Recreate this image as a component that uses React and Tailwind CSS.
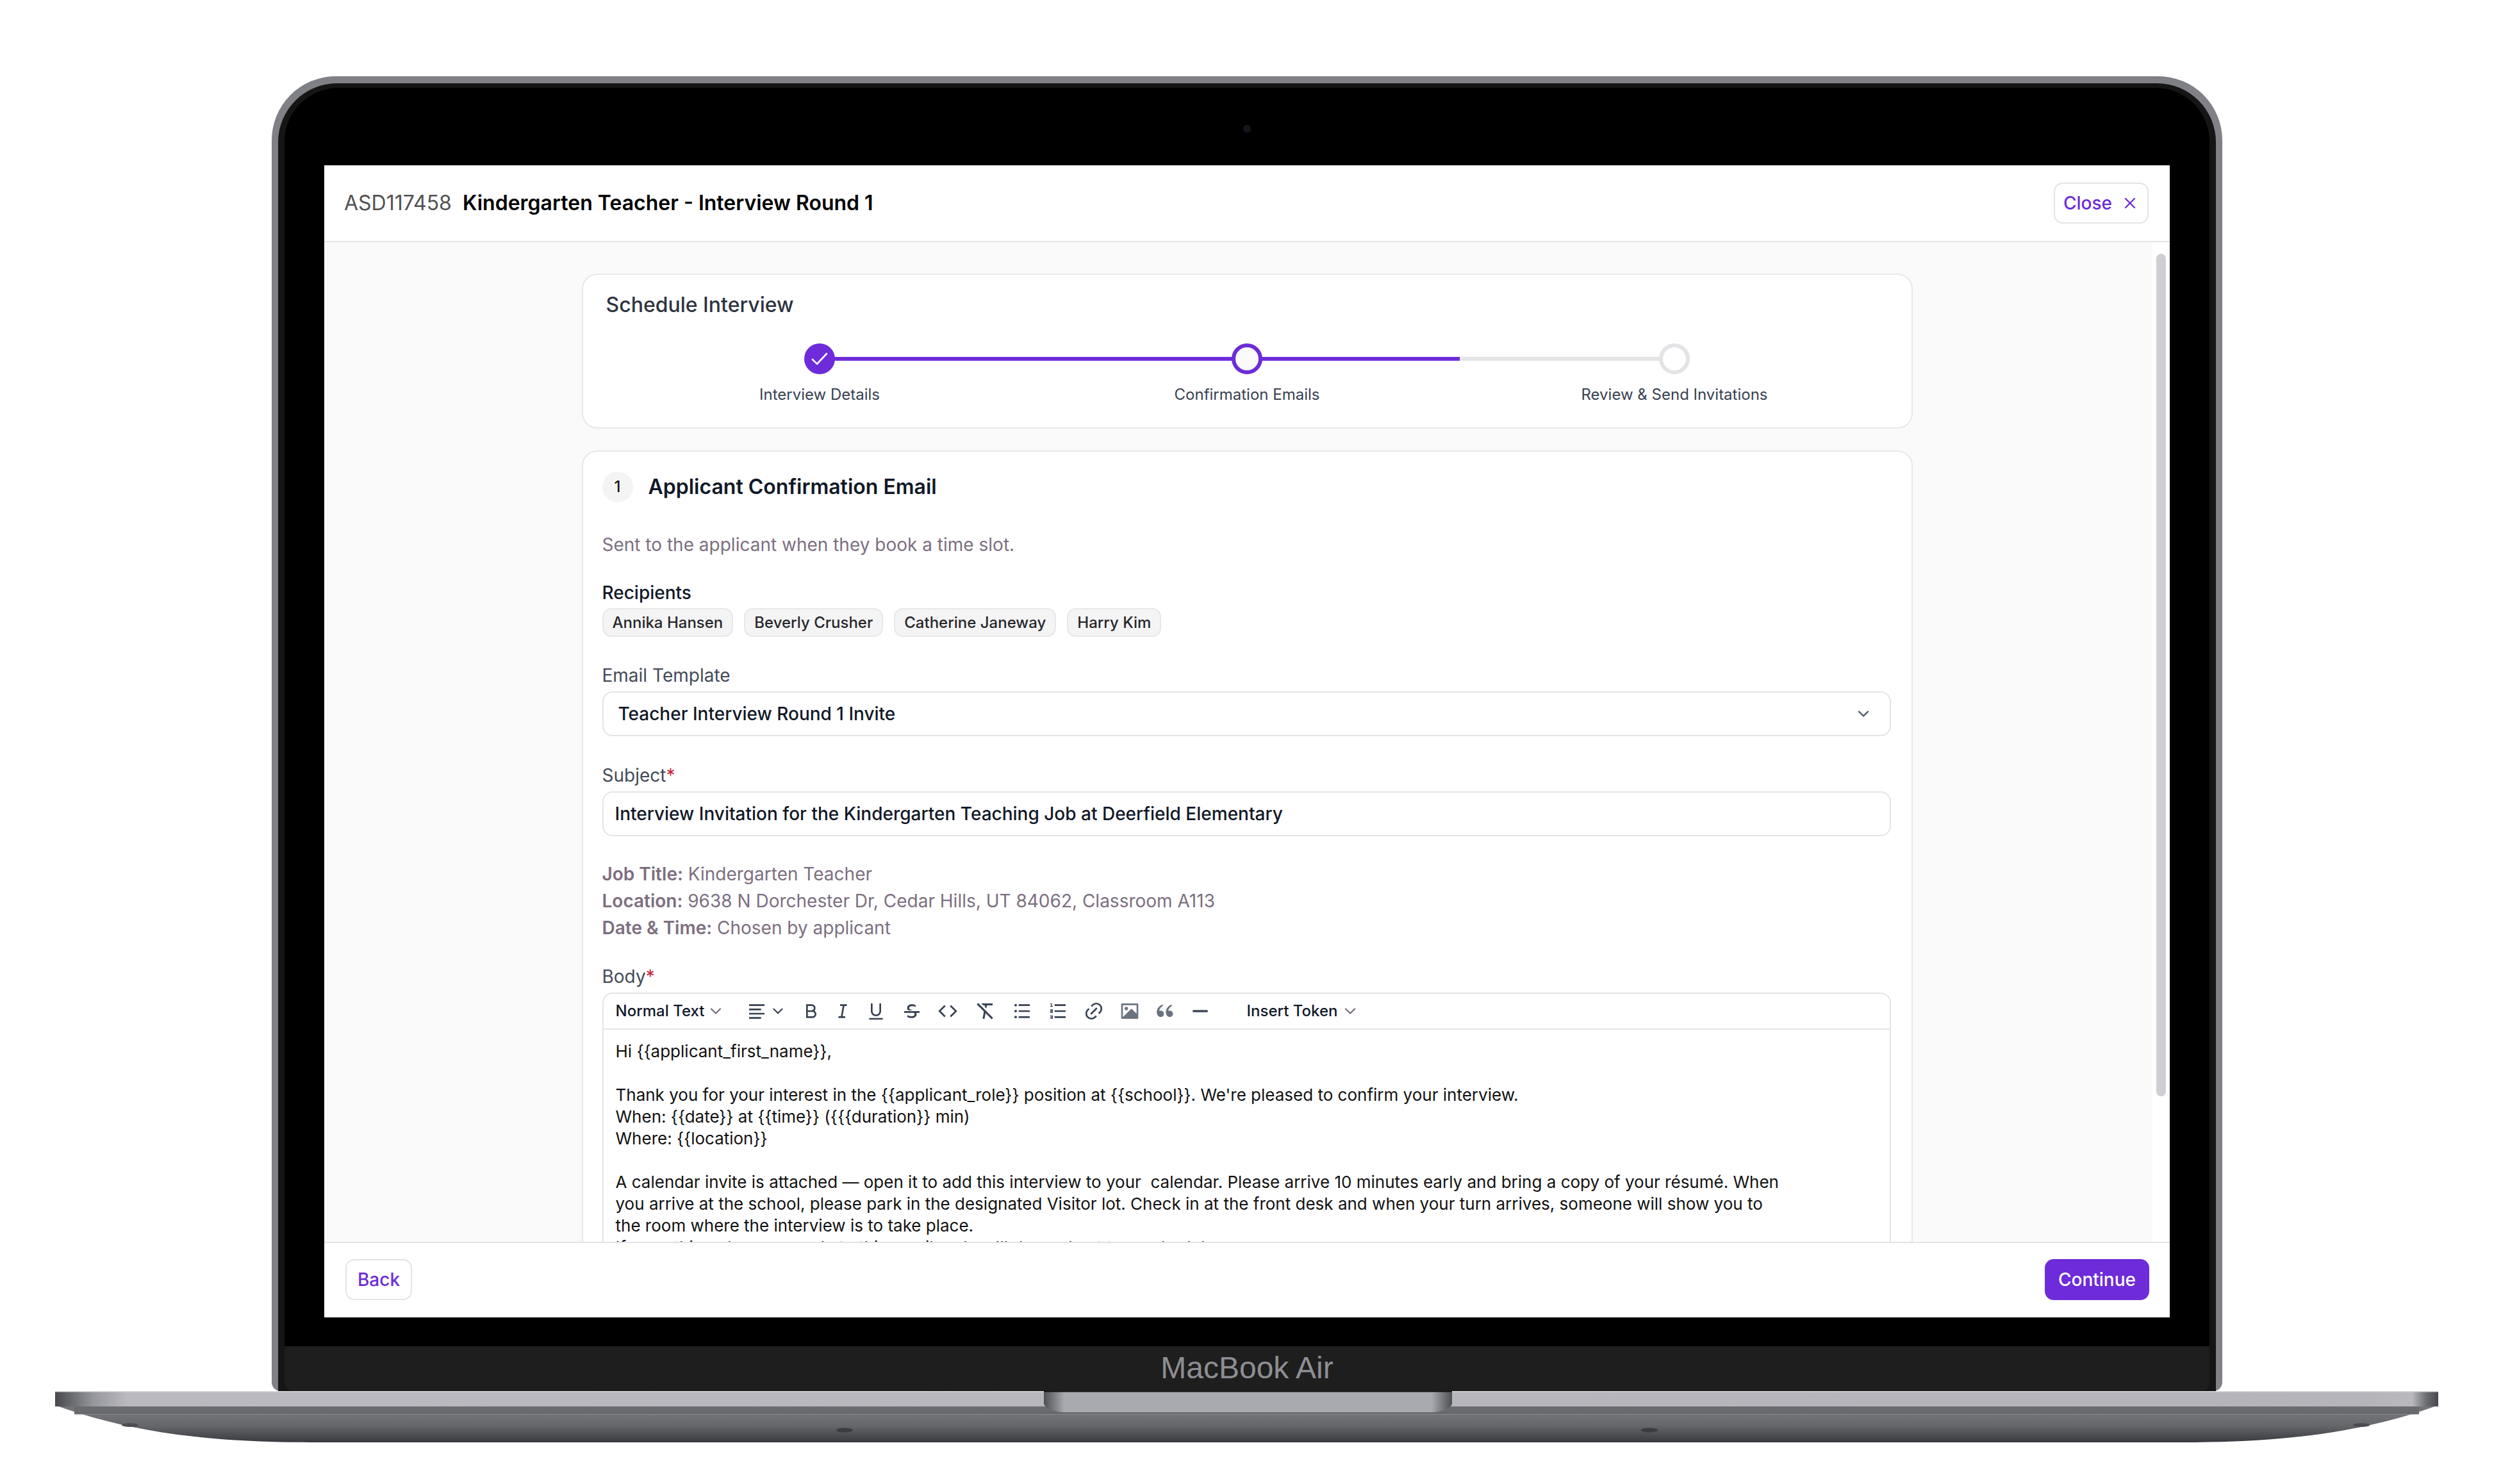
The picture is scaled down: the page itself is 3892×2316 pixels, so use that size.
import React from "react";
import { ChevronDown, X } from "lucide-react";
import {
  RiAlignLeft, RiBold, RiItalic, RiUnderline, RiStrikethrough, RiCodeLine, RiFormatClear,
  RiListUnordered, RiListOrdered, RiLink, RiImageFill, RiDoubleQuotesL, RiSubtractLine,
} from "react-icons/ri";

const Req = () => <span className="text-[#c8243c]">*</span>;

function Base() {
  return (
    <svg width="3719" height="82" viewBox="0 0 3719 82" className="block mx-auto" style={{ marginLeft: 86 }}>
      <defs>
        <linearGradient id="band" x1="0" x2="1" y1="0" y2="0">
          <stop offset="0" stopColor="#47484c" />
          <stop offset="0.016" stopColor="#96979c" />
          <stop offset="0.03" stopColor="#b9b9bf" />
          <stop offset="0.97" stopColor="#b4b4ba" />
          <stop offset="0.989" stopColor="#b9b9be" />
          <stop offset="0.995" stopColor="#6c6d71" />
          <stop offset="1" stopColor="#47484c" />
        </linearGradient>
        <linearGradient id="lower" x1="0" x2="0" y1="36" y2="80" gradientUnits="userSpaceOnUse">
          <stop offset="0" stopColor="#737478" />
          <stop offset="0.4" stopColor="#66676b" />
          <stop offset="1" stopColor="#393a3f" />
        </linearGradient>
        <linearGradient id="notch" x1="1543" x2="2180" y1="0" y2="0" gradientUnits="userSpaceOnUse">
          <stop offset="0" stopColor="#4e4f53" />
          <stop offset="0.05" stopColor="#a9aaaf" />
          <stop offset="0.95" stopColor="#a9aaaf" />
          <stop offset="1" stopColor="#4e4f53" />
        </linearGradient>
      </defs>
      <path d="M0 22 L3719 22 C3609 62 3489 80 3319 80 L400 80 C230 80 110 62 0 22 Z" fill="url(#lower)" />
      <rect x="30" y="24" width="3659" height="11" fill="#6a6b6f" />
      <rect x="30" y="34" width="3659" height="1" fill="#55565a" />
      <rect x="30" y="35" width="3659" height="1.5" fill="#85868a" />
      <rect x="0" y="0" width="3719" height="24" fill="url(#band)" />
      <rect x="0" y="0" width="3719" height="1.5" fill="#d8d8dc" />
      <path d="M1543 0 L1543 20 Q1546 30 1572 33 L2151 33 Q2177 30 2180 20 L2180 0 Z" fill="url(#notch)" />
      <rect x="1543" y="0" width="637" height="1.5" fill="#111111" />
      <ellipse cx="1232" cy="61" rx="13" ry="3.5" fill="#3b3c40" />
      <ellipse cx="2488" cy="61" rx="13" ry="3.5" fill="#3b3c40" />
      <ellipse cx="117" cy="53" rx="13" ry="3" fill="#4b4c50" />
      <ellipse cx="3599" cy="53" rx="13" ry="3" fill="#4b4c50" />
    </svg>
  );
}

function Stepper() {
  const labels = ["Interview Details", "Confirmation Emails", "Review & Send Invitations"];
  return (
    <div className="relative mx-auto mt-[38px] w-[2001px]">
      <div className="absolute left-[333px] top-[21px] h-[6px] w-[1334px] bg-[#e4e4e7]" />
      <div className="absolute left-[333px] top-[21px] h-[6px] w-[999px] bg-[#6d2bd9]" />
      <div className="relative grid grid-cols-3">
        {labels.map((l, i) => (
          <div key={l} className="flex flex-col items-center">
            {i === 0 && (
              <div className="flex h-12 w-12 items-center justify-center rounded-full bg-[#6d2bd9]">
                <svg width="26" height="20" viewBox="0 0 26 20" fill="none" stroke="#fff" strokeWidth="2.6" strokeLinecap="round" strokeLinejoin="round">
                  <path d="M2 11 L9 18 L24 2" />
                </svg>
              </div>
            )}
            {i === 1 && <div className="h-12 w-12 rounded-full border-[6px] border-[#6d2bd9] bg-[#fafafa]" />}
            {i === 2 && <div className="h-12 w-12 rounded-full border-[6px] border-[#e4e4e7] bg-white" />}
            <div className="mt-[16px] text-[24px] leading-[32px] text-[#374151]">{l}</div>
          </div>
        ))}
      </div>
    </div>
  );
}

function Chip({ children }) {
  return (
    <div className="flex h-[45px] items-center rounded-[14px] border-2 border-[#e8e8ea] bg-[#f4f4f5] px-[14px] text-[24px] font-medium text-[#27272a]">
      {children}
    </div>
  );
}

function Toolbar() {
  const g = "text-[#374151]";
  return (
    <div className="flex h-[56px] items-center border-b-2 border-[#e4e4e7] pl-[19px] text-[24px] font-medium text-[#111827]">
      <span className="w-[138px] whitespace-nowrap">Normal Text</span>
      <ChevronDown size={28} strokeWidth={2} className="ml-[4px] text-[#7c6f7f]" />
      <RiAlignLeft size={32} className={`ml-[34px] ${g}`} />
      <ChevronDown size={26} strokeWidth={2} className="ml-[4px] text-[#374151]" />
      <RiBold size={32} className={`ml-[23px] ${g}`} />
      <RiItalic size={32} className={`ml-[17px] ${g}`} />
      <RiUnderline size={32} className={`ml-[20px] ${g}`} />
      <RiStrikethrough size={32} className={`ml-[24px] ${g}`} />
      <RiCodeLine size={32} className={`ml-[24px] ${g}`} />
      <RiFormatClear size={36} className={`ml-[24px] ${g}`} />
      <RiListUnordered size={32} className={`ml-[24px] ${g}`} />
      <RiListOrdered size={32} className={`ml-[24px] ${g}`} />
      <RiLink size={32} className={`ml-[24px] ${g}`} />
      <RiImageFill size={32} className="ml-[24px] text-[#6b7280]" />
      <RiDoubleQuotesL size={34} className="ml-[22px] text-[#6b7280]" />
      <RiSubtractLine size={40} className={`ml-[18px] ${g}`} />
      <span className="ml-[53px] w-[141px] whitespace-nowrap">Insert Token</span>
      <ChevronDown size={28} strokeWidth={2} className="ml-[6px] text-[#7c6f7f]" />
    </div>
  );
}

function Modal() {
  return (
    <div className="flex h-[1798px] w-[2880px] flex-col overflow-hidden bg-white">
      <div className="flex h-[120px] shrink-0 items-center justify-between border-b-2 border-[#e4e4e7] pl-[31px] pr-[33px]">
        <div className="flex items-center gap-[17px] text-[32px]">
          <span className="text-[#525252]">ASD117458</span>
          <span className="font-semibold text-black">Kindergarten Teacher - Interview Round 1</span>
        </div>
        <button className="flex h-[64px] w-[148px] items-center justify-center gap-[14px] rounded-[14px] border-2 border-[#e4e4e7] bg-white text-[28px] font-medium text-[#6d2bd9]">
          Close <X size={28} strokeWidth={2} />
        </button>
      </div>

      <div className="relative min-h-0 flex-1 overflow-hidden bg-[#fafafa] pt-[49px]">
        <div className="absolute bottom-0 right-0 top-0 w-[27px] bg-white">
          <div className="ml-[6px] mt-[18px] h-[1315px] w-[15px] rounded-full bg-[#d1ced3]" />
        </div>

        <div className="mx-auto h-[242px] w-[2077px] rounded-[24px] border-2 border-[#e8e8ea] bg-white pt-[25px]">
          <div className="pl-[36px] text-[32px] font-medium leading-[44px] text-[#2d3340]">Schedule Interview</div>
          <Stepper />
        </div>

        <div className="mx-auto mt-[34px] w-[2077px] rounded-[24px] border-2 border-[#e8e8ea] bg-white pb-[60px] pl-[30px] pr-[32px] pt-[31px]">
          <div className="flex h-12 items-center">
            <div className="flex h-12 w-12 items-center justify-center rounded-full bg-[#f4f4f5] text-[24px] font-medium text-[#18181b]">1</div>
            <div className="ml-[24px] text-[32px] font-semibold text-[#111827]">Applicant Confirmation Email</div>
          </div>
          <p className="mt-[46px] text-[28px] leading-[40px] text-[#7c6f7f]">Sent to the applicant when they book a time slot.</p>
          <div className="mt-[35px] text-[28px] font-medium leading-[40px] text-[#111827]">Recipients</div>
          <div className="mt-[4px] flex gap-[17px]">
            <Chip>Annika Hansen</Chip>
            <Chip>Beverly Crusher</Chip>
            <Chip>Catherine Janeway</Chip>
            <Chip>Harry Kim</Chip>
          </div>

          <div className="mt-[40px] text-[28px] leading-[40px] text-[#434a57]">Email Template</div>
          <div className="mt-[5px] flex h-[70px] items-center justify-between rounded-[16px] border-2 border-[#e4e4e7] bg-white pl-[23px] pr-[27px] text-[28px] font-medium text-[#111827]">
            <span>Teacher Interview Round 1 Invite</span>
            <ChevronDown size={28} strokeWidth={2} className="text-[#4b5563]" />
          </div>

          <div className="mt-[41px] text-[28px] leading-[40px] text-[#434a57]">Subject<Req /></div>
          <div className="mt-[5px] flex h-[70px] items-center rounded-[16px] border-2 border-[#e4e4e7] bg-white pl-[18px] text-[28px] font-medium text-[#111827]">
            Interview Invitation for the Kindergarten Teaching Job at Deerfield Elementary
          </div>

          <div className="mt-[38px] text-[28px] leading-[42px] text-[#7c6f7f]">
            <div><b className="font-semibold">Job Title:</b> Kindergarten Teacher</div>
            <div><b className="font-semibold">Location:</b> 9638 N Dorchester Dr, Cedar Hills, UT 84062, Classroom A113</div>
            <div><b className="font-semibold">Date &amp; Time:</b> Chosen by applicant</div>
          </div>

          <div className="mt-[35px] text-[28px] leading-[40px] text-[#434a57]">Body<Req /></div>
          <div className="mt-[5px] rounded-[16px] border-2 border-[#e4e4e7] bg-white">
            <Toolbar />
            <div className="whitespace-pre pl-[19px] pt-[17px] text-[26px] leading-[34px] text-[#111111]">{`Hi {{applicant_first_name}},

Thank you for your interest in the {{applicant_role}} position at {{school}}. We're pleased to confirm your interview.
When: {{date}} at {{time}} ({{{duration}} min)
Where: {{location}}

A calendar invite is attached — open it to add this interview to your  calendar. Please arrive 10 minutes early and bring a copy of your résumé. When
you arrive at the school, please park in the designated Visitor lot. Check in at the front desk and when your turn arrives, someone will show you to
the room where the interview is to take place.
If something changes, reply to this email and we'll do our best to reschedule.`}</div>
          </div>
        </div>
      </div>

      <div className="flex h-[118px] shrink-0 items-center justify-between border-t-2 border-[#e4e4e7] pb-[2px] pl-[33px] pr-[32px]">
        <button className="h-[64px] w-[104px] rounded-[14px] border-2 border-[#e4e4e7] bg-white text-[28px] font-medium text-[#6d2bd9]">Back</button>
        <button className="h-[64px] w-[163px] rounded-[14px] bg-[#6d2bd9] text-[28px] font-medium text-white">Continue</button>
      </div>
    </div>
  );
}

export default function App() {
  return (
    <div className="h-[2316px] w-[3892px] overflow-hidden bg-white pt-[119px] font-[Inter,sans-serif]">
      <div className="mx-auto h-[2052px] w-[3044px] rounded-t-[100px] rounded-b-[14px] bg-[#808186] px-[10px] pt-[11px]">
        <div className="h-full rounded-t-[92px] bg-[#151515] px-[10px] pt-[7px]">
          <div className="flex h-full flex-col items-center overflow-hidden rounded-t-[84px] rounded-b-[12px] bg-black">
            <div className="mb-[51px] mt-[58px] h-3 w-3 rounded-full bg-[#14141c]" />
            <Modal />
            <div className="mt-[45px] flex h-[70px] w-full items-center justify-center bg-[#1e1e1e] pb-[2px] font-['Liberation_Sans',sans-serif] text-[48px] text-[#8e8e93]">
              MacBook Air
            </div>
          </div>
        </div>
      </div>
      <Base />
    </div>
  );
}
